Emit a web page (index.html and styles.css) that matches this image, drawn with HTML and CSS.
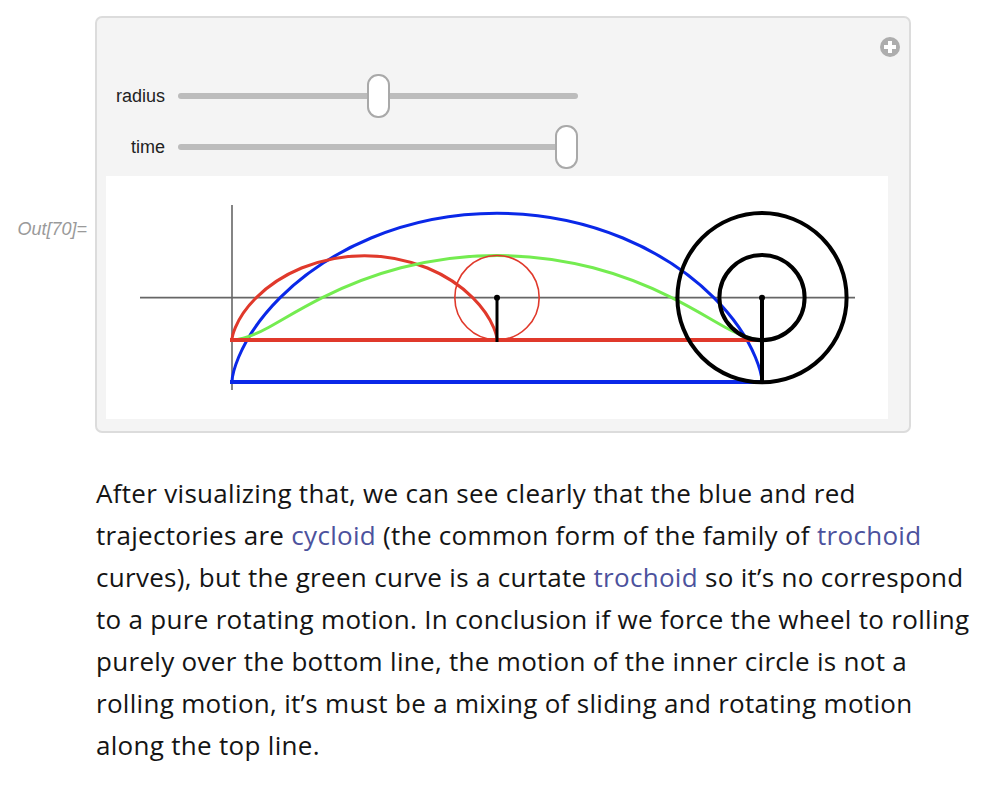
FILE: index.html
```html
<!DOCTYPE html>
<html>
<head>
<meta charset="utf-8">
<link rel="stylesheet" href="styles.css">
</head>
<body>
<div class="cell">
  <div class="out-label">Out[70]=</div>
  <div class="panel">
    <svg class="plus-icon" width="20" height="20" viewBox="0 0 20 20">
      <circle cx="10" cy="10" r="10" fill="#adadad"/>
      <rect x="8" y="4" width="4" height="12" fill="#fff"/>
      <rect x="4" y="8" width="12" height="4" fill="#fff"/>
    </svg>
    <div class="controls">
      <div class="control-row">
        <span class="control-label">radius</span>
        <div class="slider">
          <div class="track"></div>
          <div class="thumb" style="left: 189px"></div>
        </div>
      </div>
      <div class="control-row">
        <span class="control-label">time</span>
        <div class="slider">
          <div class="track"></div>
          <div class="thumb" style="left: 377px"></div>
        </div>
      </div>
    </div>
    <div class="plot">
      <svg width="782" height="243" viewBox="106 176 782 243">
        <g fill="none" stroke-linecap="butt">
          <line x1="232" y1="205" x2="232" y2="390" stroke="#666" stroke-width="1.6"/>
          <line x1="140" y1="297.65" x2="855" y2="297.65" stroke="#666" stroke-width="1.6"/>
          <path stroke="#0a28e8" stroke-width="3" d="M232,382 C232,382 232.13,372.9 238.6,357.29 C245.07,341.68 258.07,319.73 280.15,297.65 C302.23,275.57 333.41,253.62 371.1,238.01 C408.79,222.4 452.84,213.3 497,213.3 C541.16,213.3 585.21,222.4 622.9,238.01 C660.59,253.62 691.77,275.57 713.85,297.65 C735.93,319.73 748.93,341.68 755.4,357.29 C761.87,372.9 762,382 762,382"/>
          <path stroke="#e0392b" stroke-width="3" d="M232,340 C232,340 232.065,335.45 235.3,327.645 C238.535,319.84 245.035,308.865 256.075,297.825 C267.115,286.785 282.705,275.81 301.55,268.005 C320.395,260.2 342.42,255.65 364.5,255.65 C386.58,255.65 408.605,260.2 427.45,268.005 C446.295,275.81 461.885,286.785 472.925,297.825 C483.965,308.865 490.465,319.84 493.7,327.645 C496.935,335.45 497,340 497,340"/>
          <path stroke="#74ec50" stroke-width="3" d="M232,339.83 C243.04,339.83 254.15,335.29 268.42,327.48 C282.69,319.67 300.24,308.69 322.32,297.65 C344.4,286.61 371.03,275.63 400.92,267.82 C430.81,260.01 463.87,255.47 497,255.47 C530.13,255.47 563.19,260.01 593.08,267.82 C622.97,275.63 649.6,286.61 671.68,297.65 C693.76,308.69 711.31,319.67 725.58,327.48 C739.85,335.29 750.96,339.83 762,339.83"/>
          <line x1="230" y1="340" x2="762" y2="340" stroke="#e0392b" stroke-width="4.2"/>
          <line x1="230" y1="382" x2="762" y2="382" stroke="#0a28e8" stroke-width="4.2"/>
          <circle cx="497" cy="297.65" r="42.18" stroke="#e0392b" stroke-width="1.6"/>
          <circle cx="762" cy="297.65" r="84.6" stroke="#000" stroke-width="4"/>
          <circle cx="762" cy="297.65" r="42.6" stroke="#000" stroke-width="4"/>
          <line x1="497" y1="297.65" x2="497" y2="342" stroke="#000" stroke-width="3"/>
          <line x1="762" y1="297.65" x2="762" y2="384" stroke="#000" stroke-width="4"/>
        </g>
        <circle cx="497" cy="297.65" r="3" fill="#000"/>
        <circle cx="762" cy="297.65" r="3" fill="#000"/>
      </svg>
    </div>
  </div>
</div>
<p class="para">After visualizing that, we can see clearly that the blue and red<br>trajectories are <a class="link" href="#">cycloid</a> (the common form of the family of <a class="link" href="#">trochoid</a><br>curves), but the green curve is a curtate <a class="link" href="#">trochoid</a> so it’s no correspond<br>to a pure rotating motion. In conclusion if we force the wheel to rolling<br>purely over the bottom line, the motion of the inner circle is not a<br>rolling motion, it’s must be a mixing of sliding and rotating motion<br>along the top line.</p>
</body>
</html>
```

FILE: styles.css
```css
html, body {
  margin: 0;
  padding: 0;
  background: #fff;
}

.cell {
  display: flex;
  align-items: flex-start;
  padding-top: 16px;
}

.out-label {
  width: 87px;
  padding-right: 8px;
  box-sizing: content-box;
  margin-top: 202px;
  text-align: right;
  font-family: "Liberation Sans", Arial, sans-serif;
  font-style: italic;
  font-size: 18px;
  line-height: 22px;
  color: #9a9a9a;
}

.panel {
  position: relative;
  width: 816px;
  box-sizing: border-box;
  background: #f4f4f4;
  border: 2px solid #dcdcdc;
  border-radius: 7px;
  padding: 56px 21px 12px 9px;
}

.plus-icon {
  position: absolute;
  top: 19px;
  right: 9px;
  display: block;
}

.controls {
  display: flex;
  flex-direction: column;
  gap: 7px;
}

.control-row {
  display: flex;
  align-items: center;
  height: 44px;
  gap: 13px;
}

.control-label {
  width: 59px;
  text-align: right;
  font-family: "Liberation Sans", Arial, sans-serif;
  font-size: 18px;
  color: #222;
}

.slider {
  position: relative;
  width: 400px;
  height: 44px;
  display: flex;
  align-items: center;
}

.track {
  width: 100%;
  height: 6px;
  border-radius: 3px;
  background: #bcbcbc;
}

.thumb {
  position: absolute;
  top: 0;
  width: 23px;
  height: 44px;
  box-sizing: border-box;
  border: 2px solid #a9a9a9;
  border-radius: 11px;
  background: #fff;
}

.plot {
  margin-top: 7px;
  width: 782px;
  height: 243px;
  background: #fff;
}

.plot svg {
  display: block;
}

.para {
  margin: 39px 0 0 96px;
  font-family: "Open Sans", "Noto Sans", sans-serif;
  font-size: 26px;
  letter-spacing: 0.3px;
  line-height: 42px;
  color: #141414;
  white-space: nowrap;
}

.link {
  color: #4c529d;
  text-decoration: none;
}
```
